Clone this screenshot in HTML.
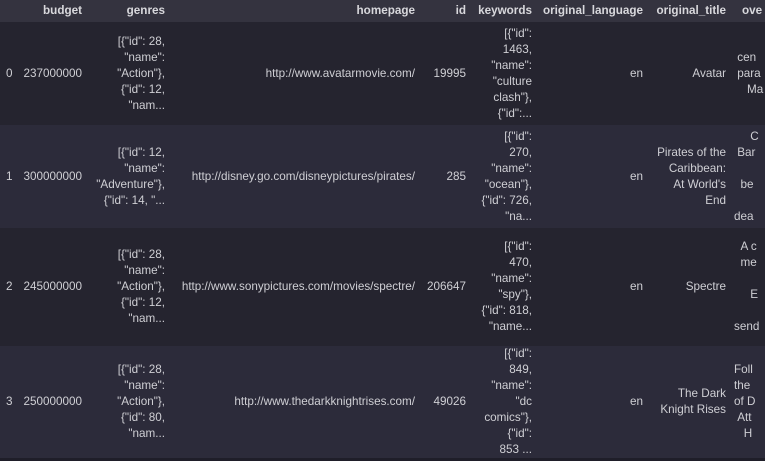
<!DOCTYPE html>
<html><head><meta charset="utf-8"><style>
html,body{margin:0;padding:0;background:#1f1e29;width:765px;height:461px;overflow:hidden}
table{border-collapse:collapse;table-layout:fixed;font-family:"Liberation Sans",sans-serif;font-size:11.7px;color:#cfcfd4;position:absolute;left:0;top:0;width:800px}
td,th{padding:0 6px 0 0;text-align:right;vertical-align:middle;line-height:16px;overflow:hidden;white-space:nowrap}
th{background:#34333f;height:22px;font-weight:bold;color:#d8d8dc}
tr.r0 td,tr.r2 td{background:#25242f}
tr.r1 td,tr.r3 td{background:#2c2b3a}
td.ix{text-align:left;padding-left:6px}
td.ov{text-align:left;padding-left:2px}
</style></head><body>
<table>
<colgroup><col style="width:21px"><col style="width:67px"><col style="width:83px"><col style="width:250px"><col style="width:51px"><col style="width:66px"><col style="width:111px"><col style="width:83px"><col style="width:68px"></colgroup>
<tr><th></th><th>budget</th><th>genres</th><th>homepage</th><th>id</th><th>keywords</th><th>original_language</th><th>original_title</th><th style="text-align:left;padding-left:10px">ove</th></tr>
<tr class="r0" style="height:103px"><td class="ix">0</td><td>237000000</td><td>[{"id": 28,<br>"name":<br>"Action"},<br>{"id": 12,<br>"nam...</td><td>http://www.avatarmovie.com/</td><td>19995</td><td>[{"id":<br>1463,<br>"name":<br>"culture<br>clash"},<br>{"id":...</td><td>en</td><td>Avatar</td><td class="ov">&nbsp;cen<br>&nbsp;para<br>&nbsp;&nbsp;&nbsp;&nbsp;Ma</td></tr>
<tr class="r1" style="height:103px"><td class="ix">1</td><td>300000000</td><td>[{"id": 12,<br>"name":<br>"Adventure"},<br>{"id": 14, "...</td><td>http://disney.go.com/disneypictures/pirates/</td><td>285</td><td>[{"id":<br>270,<br>"name":<br>"ocean"},<br>{"id": 726,<br>"na...</td><td>en</td><td>Pirates of the<br>Caribbean:<br>At World's<br>End</td><td class="ov">&nbsp;&nbsp;&nbsp;&nbsp;&nbsp;C<br>&nbsp;Bar<br><br>&nbsp;&nbsp;be<br><br>dea</td></tr>
<tr class="r2" style="height:118px"><td class="ix">2</td><td>245000000</td><td>[{"id": 28,<br>"name":<br>"Action"},<br>{"id": 12,<br>"nam...</td><td>http://www.sonypictures.com/movies/spectre/</td><td>206647</td><td>[{"id":<br>470,<br>"name":<br>"spy"},<br>{"id": 818,<br>"name...</td><td>en</td><td>Spectre</td><td class="ov">&nbsp;&nbsp;A c<br>&nbsp;&nbsp;me<br><br>&nbsp;&nbsp;&nbsp;&nbsp;&nbsp;E<br><br>send</td></tr>
<tr class="r3" style="height:112px"><td class="ix">3</td><td>250000000</td><td>[{"id": 28,<br>"name":<br>"Action"},<br>{"id": 80,<br>"nam...</td><td>http://www.thedarkknightrises.com/</td><td>49026</td><td>[{"id":<br>849,<br>"name":<br>"dc<br>comics"},<br>{"id":<br>853 ...</td><td>en</td><td>The Dark<br>Knight Rises</td><td class="ov">Foll<br>the<br>of D<br>&nbsp;Att<br>&nbsp;&nbsp;&nbsp;H</td></tr>
</table>
</body></html>
